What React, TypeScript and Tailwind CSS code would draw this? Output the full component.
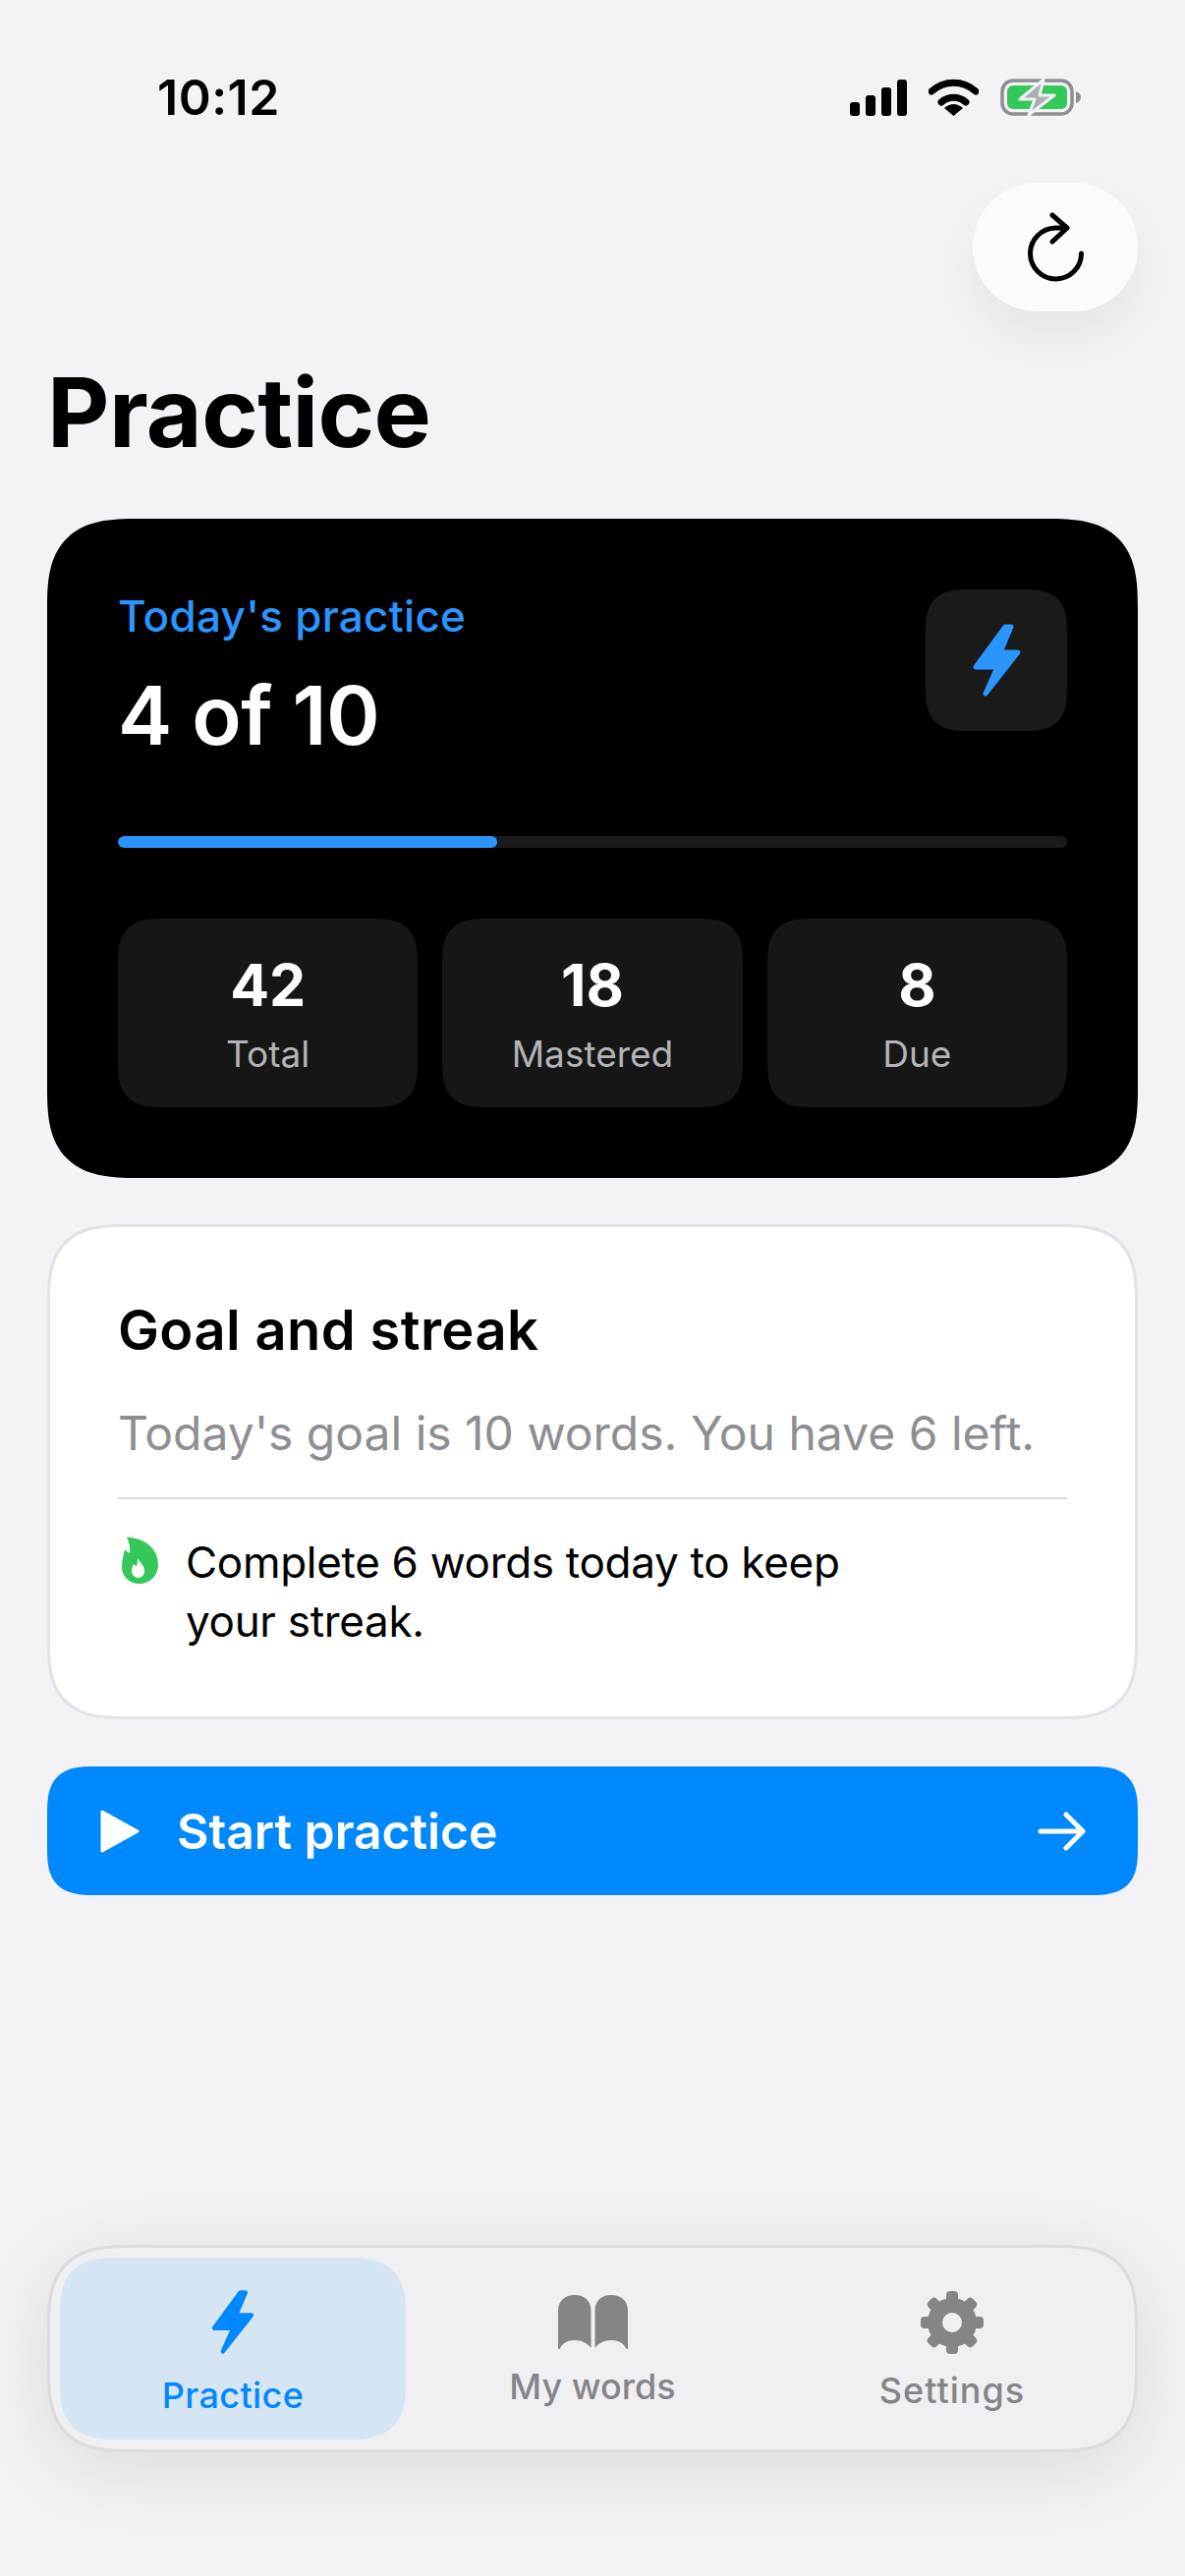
const Bolt = ({ className }: { className?: string }) => (
  <svg viewBox="0 0 49 76" className={className}>
    <path
      d="M33 4 L39 4 L28 30 H46 L13 72 L25 45 H3 Z"
      fill="currentColor"
      stroke="currentColor"
      strokeWidth="5"
      strokeLinejoin="round"
    />
  </svg>
);

const Gear = () => (
  <svg viewBox="0 0 64 64" className="w-[64px] h-[64px] text-[#858589]">
    {[0, 45, 90, 135, 180, 225, 270, 315].map((deg) => (
      <rect key={deg} x="26" y="0" width="12" height="16" rx="4" fill="currentColor" transform={`rotate(${deg} 32 32)`} />
    ))}
    <circle cx="32" cy="32" r="17.5" fill="none" stroke="currentColor" strokeWidth="15" />
  </svg>
);

const Book = () => (
  <svg viewBox="0 0 71 55" className="w-[71px] h-[55px] text-[#858589]">
    <path
      d="M0 16 C0 6 7 0 17 0 C27 0 33.5 6 33.5 16 V54 C30 49 24 46 17 46 C10 46 4 49 1.500 55 H0 Z"
      fill="currentColor"
    />
    <path
      d="M71 16 C71 6 64 0 54 0 C44 0 37.500 6 37.500 16 V54 C41 49 47 46 54 46 C61 46 67 49 69.500 55 H71 Z"
      fill="currentColor"
    />
  </svg>
);

const StatusBar = () => (
  <div className="flex items-center justify-between pt-[70px] pl-[160px] pr-[106px] h-[128px]">
    <span className="text-[50px] font-semibold leading-[58px] tracking-[0.5px] text-black">10:12</span>
    <div className="flex items-center gap-[22px]">
      <div className="flex items-end gap-[6px] h-[37px]">
        <div className="w-[10px] h-[14px] rounded-[3px] bg-black" />
        <div className="w-[10px] h-[21px] rounded-[3px] bg-black" />
        <div className="w-[10px] h-[29px] rounded-[3px] bg-black" />
        <div className="w-[10px] h-[37px] rounded-[3px] bg-black" />
      </div>
      <svg viewBox="0 0 51 38" className="w-[51px] h-[38px]">
        <path d="M3 13 A33 33 0 0 1 48 13" fill="none" stroke="#000" strokeWidth="7" strokeLinecap="round" />
        <path d="M13 24 A19 19 0 0 1 38 24" fill="none" stroke="#000" strokeWidth="7" strokeLinecap="round" />
        <path d="M25.500 38 L16 30 Q25.500 22 35 30 Z" fill="#000" />
      </svg>
      <svg viewBox="0 0 82 38" className="w-[82px] h-[38px]">
        <rect x="2" y="2" width="71" height="34" rx="11" fill="none" stroke="#8e8e93" strokeWidth="3.500" />
        <rect x="7" y="7" width="61" height="24" rx="6" fill="#34c759" />
        <path d="M77 13 Q82 15 82 19 Q82 23 77 25 Z" fill="#8e8e93" />
        <path
          d="M44 1 L20 21 H35 L29 37 L55 17 H40 Z"
          fill="#aeaeb2"
          stroke="#f2f2f7"
          strokeWidth="3"
          strokeLinejoin="round"
        />
      </svg>
    </div>
  </div>
);

const stats = [
  { value: "42", label: "Total" },
  { value: "18", label: "Mastered" },
  { value: "8", label: "Due" },
];

const PracticeCard = () => (
  <div className="mt-[53px] h-[671px] rounded-[92px] [corner-shape:superellipse(1.5)] bg-black px-[72px] pt-[72px]">
    <div className="flex justify-between">
      <div>
        <p className="text-[44px] leading-[53px] font-medium tracking-[0.3px] text-[#2b95ff] mt-[1px]">Today's practice</p>
        <p className="mt-[24px] text-[83px] leading-[100px] font-semibold tracking-[-0.5px] text-white">4 of 10</p>
      </div>
      <div className="w-[144px] h-[144px] rounded-[44px] [corner-shape:superellipse(1.5)] bg-[#1a1a1a] flex items-center justify-center">
        <Bolt className="w-[49px] h-[76px] text-[#2b95ff]" />
      </div>
    </div>
    <div className="mt-[73px] h-[12px] rounded-full bg-[#1a1a1a] overflow-hidden">
      <div className="h-full w-[40%] rounded-full bg-[#2b95ff]" />
    </div>
    <div className="mt-[72px] grid grid-cols-3 gap-[25px]">
      {stats.map((s) => (
        <div
          key={s.label}
          className="h-[192px] rounded-[46px] [corner-shape:superellipse(1.5)] bg-[#161616] flex flex-col items-center pt-[33px]"
        >
          <span className="text-[59px] leading-[70px] font-bold text-white">{s.value}</span>
          <span className="mt-[13px] text-[37px] leading-[44px] text-[#b4b4b8]">{s.label}</span>
        </div>
      ))}
    </div>
  </div>
);

const GoalCard = () => (
  <div className="mt-[47px] h-[504px] rounded-[80px] [corner-shape:superellipse(1.5)] border-[3px] border-[#e3e3e7] bg-white px-[69px] pt-[71px]">
    <p className="text-[56px] leading-[68px] font-semibold tracking-[0.4px] text-black">Goal and streak</p>
    <p className="mt-[41px] text-[48px] leading-[60px] text-[#8e8e93]">Today's goal is 10 words. You have 6 left.</p>
    <div className="mt-[35px] h-[2px] bg-[#dcdce0]" />
    <div className="mt-[34px] flex items-start">
      <svg viewBox="0 0 37 48" className="w-[37px] h-[48px] mt-[4px] ml-[4px] shrink-0">
        <path
          d="M5 1 C9 0 37 4 37 29 C37 40 28 48 18 48 C8 48 0 41 0 31 C0 24 2 18 3 13 C5 15 6 16 8 17 C9 11 7 5 5 1 Z"
          fill="#34c759"
        />
        <path
          d="M16 22 C17 25 23 29 23 35 C23 39 20 42 17 42 C13 42 10 39 10 35 C10 32 11 30 12 28 C13 29 14 30 15 30 C16 27 16 25 16 22 Z"
          fill="#fff"
        />
      </svg>
      <p className="ml-[28px] text-[44px] leading-[60px] tracking-[-0.3px] text-black w-[720px]">
        Complete 6 words today to keep your streak.
      </p>
    </div>
  </div>
);

const StartButton = () => (
  <div className="mt-[48px] h-[131px] rounded-[48px] [corner-shape:superellipse(1.5)] bg-[#0088ff] flex items-center pl-[54px] pr-[52px]">
    <svg viewBox="0 0 40 44" className="w-[40px] h-[44px]">
      <path d="M2 2 L38 22 L2 42 Z" fill="#fff" stroke="#fff" strokeWidth="3" strokeLinejoin="round" />
    </svg>
    <span className="ml-[38px] text-[50px] leading-[60px] font-semibold tracking-[-0.1px] text-white">Start practice</span>
    <svg viewBox="0 0 50 40" className="w-[50px] h-[40px] ml-auto">
      <path d="M3 20 H46 M29 3 L46 20 L29 37" fill="none" stroke="#fff" strokeWidth="5" strokeLinecap="round" strokeLinejoin="round" />
    </svg>
  </div>
);

const TabBar = () => (
  <div className="mt-auto mb-[126px] h-[211px] rounded-[84px] [corner-shape:superellipse(1.5)] border-[3px] border-[#dcdce0] bg-[#f0f0f3] p-[10px] flex shadow-[0_16px_80px_rgba(0,0,0,0.1)]">
    <div className="w-[352px] rounded-[60px] [corner-shape:superellipse(1.5)] bg-[#d6e5f3] flex flex-col items-center pt-[32px]">
      <Bolt className="w-[44px] h-[67px] text-[#0088ff]" />
      <span className="mt-[19px] text-[36px] leading-[44px] font-medium tracking-[0.4px] text-[#0088ff]">Practice</span>
    </div>
    <div className="flex-1 flex flex-col items-center pt-[38px]">
      <Book />
      <span className="mt-[16px] text-[36px] leading-[44px] font-medium text-[#858589]">My words</span>
    </div>
    <div className="w-[352px] flex flex-col items-center pt-[34px]">
      <Gear />
      <span className="mt-[15px] text-[36px] leading-[44px] font-medium tracking-[1px] text-[#858589]">Settings</span>
    </div>
  </div>
);

export default function App() {
  return (
    <div className="w-[1206px] h-[2622px] overflow-hidden bg-[#f2f2f7] font-['Inter',sans-serif] flex flex-col">
      <StatusBar />
      <div className="flex-1 flex flex-col px-[48px]">
        <div className="mt-[58px] self-end w-[168px] h-[131px] rounded-[65px] bg-[#fbfbfd] flex items-center justify-center shadow-[0_24px_50px_rgba(0,0,0,0.06)]">
          <svg viewBox="0 0 70 75" className="w-[70px] h-[75px]">
            <path
              d="M61.500 44 A26 26 0 1 1 35 18 H46 M32 5 L47 18 L32 32"
              fill="none"
              stroke="#000"
              strokeWidth="5"
              strokeLinecap="round"
              strokeLinejoin="round"
            />
          </svg>
        </div>
        <h1 className="mt-[44px] text-[98px] leading-[118px] font-bold tracking-[-0.6px] text-black -mb-[4px]">Practice</h1>
        <PracticeCard />
        <GoalCard />
        <StartButton />
        <TabBar />
      </div>
    </div>
  );
}
